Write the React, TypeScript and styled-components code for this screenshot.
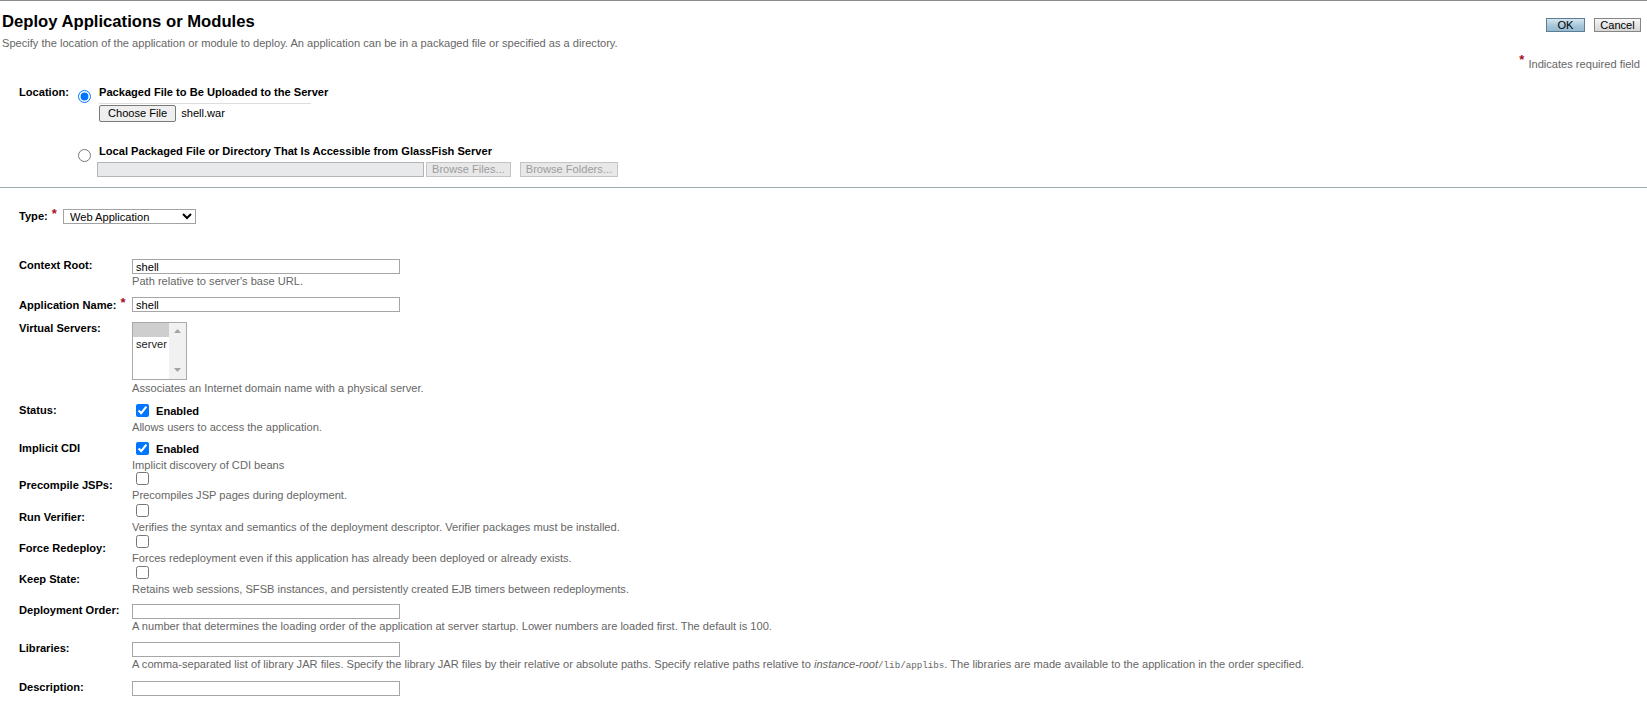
import React from "react";
import styled, { createGlobalStyle } from "styled-components";

const GlobalStyle = createGlobalStyle`
  html, body { margin: 0; padding: 0; background: #fff; }
  body {
    font-family: "Liberation Sans", Arial, Helvetica, sans-serif;
    color: #000;
  }
  * { box-sizing: border-box; }
`;

const FONT = "11.1px";

const Page = styled.div`
  border-top: 1px solid #8c8c8c;
  min-height: 720px;
  background: #fff;
`;

const Header = styled.div`
  display: flex;
  justify-content: space-between;
  align-items: flex-start;
  padding: 0 6px 0 2px;
`;

const TitleBlock = styled.div`
  padding-top: 11px;
`;

const Title = styled.h1`
  margin: 0;
  font-size: 16.65px;
  line-height: 20px;
  font-weight: bold;
  color: #000;
`;

const PageHelp = styled.div`
  margin-top: 5px;
  font-size: ${FONT};
  line-height: 13px;
  color: #666;
`;

const ButtonGroup = styled.div`
  display: flex;
  gap: 9px;
  padding-top: 17px;
`;

const TopButton = styled.button<{ $primary?: boolean; $width: number }>`
  width: ${(p) => p.$width}px;
  height: 14px;
  padding: 0;
  font-family: inherit;
  font-size: ${FONT};
  line-height: 12px;
  color: #000;
  border: 1px solid ${(p) => (p.$primary ? "#5d7d94" : "#858585")};
  background: ${(p) =>
    p.$primary
      ? "linear-gradient(#d6e6ef, #a7c7da 55%, #94b9cf)"
      : "linear-gradient(#f8f8f8, #e4e4e4 55%, #d6d6d6)"};
  cursor: pointer;
`;

const RequiredNote = styled.div`
  display: flex;
  justify-content: flex-end;
  margin-top: 8px;
  padding-right: 7px;
  font-size: ${FONT};
  line-height: 13px;
  color: #666;
`;

const Req = styled.span`
  color: #a60e1f;
  font-size: 13px;
  font-weight: bold;
  line-height: 9px;
  position: relative;
  top: -3px;
  margin-right: 4px;
`;

const LabelReq = styled(Req)`
  margin-left: 4px;
  margin-right: 0;
  top: -2px;
`;

const LocationSection = styled.div`
  display: flex;
  margin-top: 15px;
  padding-left: 19px;
`;

const LocationLabel = styled.div`
  width: 59px;
  font-size: ${FONT};
  line-height: 13px;
  font-weight: bold;
`;

const Options = styled.div`
  display: flex;
  flex-direction: column;
`;

const Option = styled.div<{ $top?: number }>`
  display: flex;
  margin-top: ${(p) => p.$top ?? 0}px;
`;

const Radio = styled.input`
  width: 13px;
  height: 13px;
  margin: 4px 8px 0 0;
  flex: none;
`;

const OptionBody = styled.div`
  display: flex;
  flex-direction: column;
`;

const OptionTitle = styled.div`
  font-size: ${FONT};
  line-height: 13px;
  font-weight: bold;
`;

const FileRow = styled.div`
  display: flex;
  align-items: center;
  gap: 5px;
  margin-top: 4px;
  padding-top: 1px;
  width: 212px;
  border-top: 1px solid #dedede;
`;

const ChooseButton = styled.button`
  height: 17px;
  padding: 0 8px;
  font-family: inherit;
  font-size: ${FONT};
  line-height: 15px;
  color: #000;
  background: #efefef;
  border: 1px solid #7a7a7a;
  border-radius: 2px;
`;

const FileName = styled.span`
  font-size: ${FONT};
  line-height: 13px;
`;

const PathRow = styled.div`
  display: flex;
  margin-top: 4px;
  margin-left: -2px;
`;

const PathField = styled.input`
  width: 327px;
  height: 15px;
  margin: 0;
  border: 1px solid #b4b4b4;
  background: #e7e9eb;
`;

const BrowseButton = styled.button<{ $gap: number }>`
  height: 15px;
  margin-left: ${(p) => p.$gap}px;
  padding: 0 5px;
  font-family: inherit;
  font-size: ${FONT};
  line-height: 13px;
  color: #9d9d9d;
  background: #e8e8e8;
  border: 1px solid #c4c4c4;
  border-radius: 0;
`;

const Separator = styled.div`
  height: 1px;
  margin-top: 10px;
  background: #a0a9ae;
`;

const TypeRow = styled.div`
  display: flex;
  align-items: flex-start;
  margin-top: 21px;
  padding-left: 19px;
`;

const TypeLabel = styled.div`
  width: 44px;
  font-size: ${FONT};
  line-height: 15px;
  font-weight: bold;
`;

const TypeSelect = styled.select`
  width: 133px;
  height: 15px;
  margin: 0;
  padding: 0 0 0 2px;
  font-family: inherit;
  font-size: ${FONT};
  color: #000;
  background: #fff;
  border: 1px solid #a3a3a3;
  border-radius: 0;
`;

const Properties = styled.div`
  padding-left: 19px;
`;

const PropRow = styled.div<{ $top: number }>`
  display: grid;
  grid-template-columns: 113px 1fr;
  margin-top: ${(p) => p.$top}px;
`;

const PropLabel = styled.div<{ $pad?: number }>`
  padding-top: ${(p) => p.$pad ?? 0}px;
  font-size: ${FONT};
  line-height: 13px;
  font-weight: bold;
  color: #000;
`;

const PropValue = styled.div`
  display: flex;
  flex-direction: column;
  align-items: flex-start;
`;

const TextInput = styled.input`
  width: 268px;
  height: 15px;
  margin: 0;
  padding: 0 3px;
  font-family: inherit;
  font-size: ${FONT};
  color: #000;
  background: #fff;
  border: 1px solid #a6a6a6;
  border-radius: 0;
  outline: none;
`;

const Help = styled.div<{ $top: number }>`
  margin-top: ${(p) => p.$top}px;
  font-size: ${FONT};
  line-height: 13px;
  color: #666;
  white-space: nowrap;
`;

const Em = styled.i`
  font-style: italic;
`;

const Code = styled.code`
  font-family: "Liberation Mono", "DejaVu Sans Mono", monospace;
  font-size: 9.2px;
`;

const CheckLine = styled.label`
  display: flex;
  align-items: center;
  height: 13px;
  font-size: ${FONT};
  font-weight: bold;
`;

const Check = styled.input`
  width: 13px;
  height: 13px;
  margin: 0 7px 0 4px;
  flex: none;
`;

const ListBox = styled.div`
  display: flex;
  width: 55px;
  height: 58px;
  border: 1px solid #a9a9a9;
  background: #fff;
`;

const ListItems = styled.div`
  display: flex;
  flex-direction: column;
  width: 36px;
`;

const ListItem = styled.div<{ $selected?: boolean }>`
  height: 14px;
  padding-left: 3px;
  font-size: ${FONT};
  line-height: 14px;
  color: #222;
  background: ${(p) => (p.$selected ? "#cecece" : "transparent")};
`;

const ScrollTrack = styled.div`
  flex: 1;
  display: flex;
  flex-direction: column;
  justify-content: space-between;
  align-items: center;
  padding: 6px 0 7px;
  background: #f1f1f1;
`;

const Arrow = ({ down }: { down?: boolean }) => (
  <svg width="7" height="4" viewBox="0 0 7 4">
    <path d={down ? "M0 0 H7 L3.5 4 Z" : "M0 4 H7 L3.5 0 Z"} fill="#a3a3a3" />
  </svg>
);

const noop = () => {};

export default function App() {
  return (
    <Page>
      <GlobalStyle />
      <Header>
        <TitleBlock>
          <Title>Deploy Applications or Modules</Title>
          <PageHelp>
            Specify the location of the application or module to deploy. An application can be in a
            packaged file or specified as a directory.
          </PageHelp>
        </TitleBlock>
        <ButtonGroup>
          <TopButton $primary $width={39}>OK</TopButton>
          <TopButton $width={47}>Cancel</TopButton>
        </ButtonGroup>
      </Header>

      <RequiredNote>
        <Req>*</Req>
        Indicates required field
      </RequiredNote>

      <LocationSection>
        <LocationLabel>Location:</LocationLabel>
        <Options>
          <Option>
            <Radio type="radio" name="location" defaultChecked />
            <OptionBody>
              <OptionTitle>Packaged File to Be Uploaded to the Server</OptionTitle>
              <FileRow>
                <ChooseButton type="button">Choose File</ChooseButton>
                <FileName>shell.war</FileName>
              </FileRow>
            </OptionBody>
          </Option>
          <Option $top={23}>
            <Radio type="radio" name="location" />
            <OptionBody>
              <OptionTitle>Local Packaged File or Directory That Is Accessible from GlassFish Server</OptionTitle>
              <PathRow>
                <PathField type="text" disabled />
                <BrowseButton type="button" disabled $gap={2}>Browse Files...</BrowseButton>
                <BrowseButton type="button" disabled $gap={9}>Browse Folders...</BrowseButton>
              </PathRow>
            </OptionBody>
          </Option>
        </Options>
      </LocationSection>

      <Separator />

      <TypeRow>
        <TypeLabel>
          Type:<LabelReq>*</LabelReq>
        </TypeLabel>
        <TypeSelect defaultValue="war">
          <option value="war">Web Application</option>
          <option value="ear">Enterprise Application</option>
        </TypeSelect>
      </TypeRow>

      <Properties>
        <PropRow $top={35}>
          <PropLabel>Context Root:</PropLabel>
          <PropValue>
            <TextInput type="text" defaultValue="shell" />
            <Help $top={1}>Path relative to server's base URL.</Help>
          </PropValue>
        </PropRow>

        <PropRow $top={9}>
          <PropLabel $pad={2}>
            Application Name:<LabelReq>*</LabelReq>
          </PropLabel>
          <PropValue>
            <TextInput type="text" defaultValue="shell" />
          </PropValue>
        </PropRow>

        <PropRow $top={10}>
          <PropLabel>Virtual Servers:</PropLabel>
          <PropValue>
            <ListBox>
              <ListItems>
                <ListItem $selected>&nbsp;</ListItem>
                <ListItem>server</ListItem>
              </ListItems>
              <ScrollTrack>
                <Arrow />
                <Arrow down />
              </ScrollTrack>
            </ListBox>
            <Help $top={2}>Associates an Internet domain name with a physical server.</Help>
          </PropValue>
        </PropRow>

        <PropRow $top={9}>
          <PropLabel>Status:</PropLabel>
          <PropValue>
            <CheckLine>
              <Check type="checkbox" defaultChecked onChange={noop} />
              Enabled
            </CheckLine>
            <Help $top={4}>Allows users to access the application.</Help>
          </PropValue>
        </PropRow>

        <PropRow $top={8}>
          <PropLabel>Implicit CDI</PropLabel>
          <PropValue>
            <CheckLine>
              <Check type="checkbox" defaultChecked onChange={noop} />
              Enabled
            </CheckLine>
            <Help $top={4}>Implicit discovery of CDI beans</Help>
          </PropValue>
        </PropRow>

        <PropRow $top={0}>
          <PropLabel $pad={7}>Precompile JSPs:</PropLabel>
          <PropValue>
            <CheckLine>
              <Check type="checkbox" />
            </CheckLine>
            <Help $top={4}>Precompiles JSP pages during deployment.</Help>
          </PropValue>
        </PropRow>

        <PropRow $top={2}>
          <PropLabel $pad={7}>Run Verifier:</PropLabel>
          <PropValue>
            <CheckLine>
              <Check type="checkbox" />
            </CheckLine>
            <Help $top={4}>
              Verifies the syntax and semantics of the deployment descriptor. Verifier packages must be
              installed.
            </Help>
          </PropValue>
        </PropRow>

        <PropRow $top={1}>
          <PropLabel $pad={7}>Force Redeploy:</PropLabel>
          <PropValue>
            <CheckLine>
              <Check type="checkbox" />
            </CheckLine>
            <Help $top={4}>
              Forces redeployment even if this application has already been deployed or already exists.
            </Help>
          </PropValue>
        </PropRow>

        <PropRow $top={1}>
          <PropLabel $pad={7}>Keep State:</PropLabel>
          <PropValue>
            <CheckLine>
              <Check type="checkbox" />
            </CheckLine>
            <Help $top={4}>
              Retains web sessions, SFSB instances, and persistently created EJB timers between
              redeployments.
            </Help>
          </PropValue>
        </PropRow>

        <PropRow $top={8}>
          <PropLabel>Deployment Order:</PropLabel>
          <PropValue>
            <TextInput type="text" />
            <Help $top={1}>
              A number that determines the loading order of the application at server startup. Lower
              numbers are loaded first. The default is 100.
            </Help>
          </PropValue>
        </PropRow>

        <PropRow $top={9}>
          <PropLabel>Libraries:</PropLabel>
          <PropValue>
            <TextInput type="text" />
            <Help $top={1}>
              A comma-separated list of library JAR files. Specify the library JAR files by their
              relative or absolute paths. Specify relative paths relative to <Em>instance-root</Em>
              <Code>/lib/applibs</Code>. The libraries are made available to the application in the
              order specified.
            </Help>
          </PropValue>
        </PropRow>

        <PropRow $top={9}>
          <PropLabel>Description:</PropLabel>
          <PropValue>
            <TextInput type="text" />
          </PropValue>
        </PropRow>
      </Properties>
    </Page>
  );
}
